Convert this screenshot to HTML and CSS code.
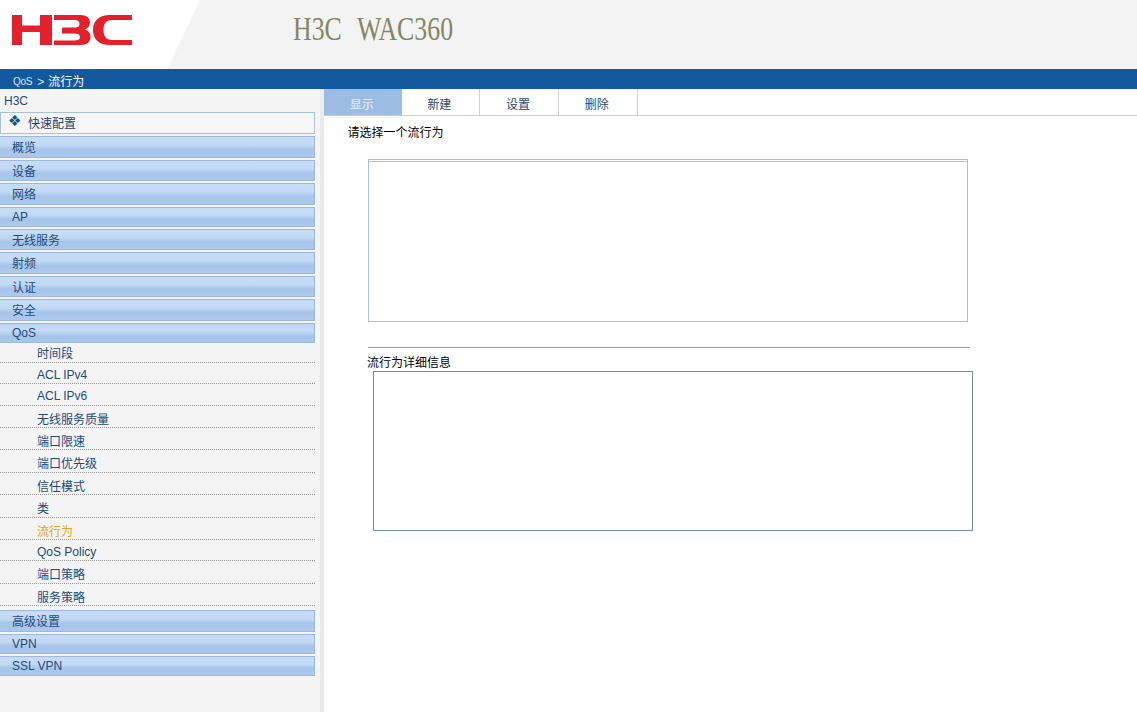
FILE: index.html
```html
<!DOCTYPE html>
<html lang="zh">
<head>
<meta charset="utf-8">
<title>H3C WAC360</title>
<link rel="stylesheet" href="styles.css">
</head>
<body>
<header class="top">
  <div class="logo-area">
    <svg class="logo" width="122" height="32" viewBox="0 0 122 32" aria-label="H3C">
      <path d="M0 1h10v10.500h18V1H40v30H28V18H10v13H0z" fill="#e3202c"/>
      <path d="M42 1h26c7 0 10 3 10 7.500c0 3.500-2 6-5.500 7c3.800 .8 6 3.500 6 7.500C78.500 28 75 31 68 31H42v-4.500h20c4 0 6-1 6-3.500s-2-3.500-6-3.500H50v-6h12c4 0 5.500-1 5.500-3.500S66 6 62 6H42z" fill="#e3202c"/>
      <path d="M120 1v5h-20c-6 0-8.500 4-8.500 10s2.500 10 8.500 10h20v5H98C87 31 81 25 81 16S87 1 98 1z" fill="#e3202c"/>
    </svg>
  </div>
  <div class="title"><span class="title-text">H3C WAC360</span></div>
</header>
<div class="crumb"><span class="crumb-root">QoS</span><span class="crumb-sep">&gt;</span><span>流行为</span></div>
<div class="body">
  <nav class="side">
    <div class="brand">H3C</div>
    <div class="quick"><span class="quick-icon">❖</span>快速配置</div>
    <div class="group">概览</div>
    <div class="group">设备</div>
    <div class="group">网络</div>
    <div class="group latin">AP</div>
    <div class="group">无线服务</div>
    <div class="group">射频</div>
    <div class="group">认证</div>
    <div class="group">安全</div>
    <div class="group latin open">QoS</div>
    <ul class="sub">
      <li class="first">时间段</li>
      <li class="latin">ACL IPv4</li>
      <li class="latin">ACL IPv6</li>
      <li>无线服务质量</li>
      <li>端口限速</li>
      <li>端口优先级</li>
      <li>信任模式</li>
      <li>类</li>
      <li class="active">流行为</li>
      <li class="latin">QoS Policy</li>
      <li>端口策略</li>
      <li>服务策略</li>
    </ul>
    <div class="group">高级设置</div>
    <div class="group latin">VPN</div>
    <div class="group latin">SSL VPN</div>
  </nav>
  <main class="main">
    <div class="tabs">
      <div class="tab current">显示</div>
      <div class="tab">新建</div>
      <div class="tab">设置</div>
      <div class="tab">删除</div>
    </div>
    <p class="prompt">请选择一个流行为</p>
    <div class="list-box"></div>
    <div class="rule"></div>
    <p class="detail-label">流行为详细信息</p>
    <div class="detail-box"></div>
  </main>
</div>
</body>
</html>
```
FILE: styles.css
```css
* { box-sizing: border-box; }
html, body { height: 100%; }
body {
  margin: 0;
  height: 712px;
  overflow: hidden;
  font: 12px/16px "Liberation Sans", "Noto Sans CJK SC", sans-serif;
  color: #000;
  background: #fff;
  display: flex;
  flex-direction: column;
}
.top {
  height: 69px;
  flex: none;
  display: flex;
  background: #f3f3f3;
}
.logo-area {
  width: 200px;
  flex: none;
  padding: 14px 0 0 12px;
  background: #fff;
  clip-path: polygon(0 0, 200px 0, 167px 69px, 0 69px);
}
.logo { display: block; }
.title {
  padding: 8px 0 0 93px;
  font: 34px/42px "Liberation Serif", serif;
  color: #83885f;
  white-space: pre;
}
.title-text {
  display: inline-block;
  transform: scaleX(.76);
  transform-origin: left center;
  word-spacing: 12px;
}
.crumb {
  height: 20px;
  flex: none;
  padding: 5px 0 0 13px;
  background: #12599f;
  color: #fff;
  font-size: 12px;
  line-height: 16px;
  display: flex;
}
.crumb-root { font-size: 10px; letter-spacing: -.3px; color: #dbe6f2; }
.crumb-sep { margin: 0 5px 0 5px; width: 6px; font-weight: 300; color: #dbe6f2; }
.body { flex: 1; display: flex; min-height: 0; }
.side {
  width: 324px;
  flex: none;
  padding: 3px 5px 0 0;
  background: #f4f4f4;
  border-right: 4px solid #ececec;
  color: #234a7c;
}
.brand { height: 20px; line-height: 18px; padding-left: 4px; }
.quick {
  height: 22px;
  margin-bottom: 2px;
  line-height: 22px;
  border: 1px solid #a9c1de;
  background: #f6f6f6;
  padding-left: 7px;
  display: flex;
  color: #1f3f6e;
}
.quick-icon { width: 20px; font: bold 15px/17px "DejaVu Sans", sans-serif; color: #1f4a80; }
.group {
  height: 21.500px;
  margin-bottom: 2px;
  padding-left: 12px;
  line-height: 22px;
  border: 1px solid #9db8d8;
  border-left: 0;
  background: linear-gradient(to bottom, #c6dcf6 0, #c2d9f5 40%, #a6c5ea 62%, #adc9ec 100%);
  color: #234a7c;
}
.group.latin { height: 20px; line-height: 19px; }
.group.open { background: linear-gradient(to bottom, #b9d4f3 0, #c5dcf6 35%, #a4c3e9 70%, #a9c7eb 100%); margin-bottom: 0; }
.sub { list-style: none; margin: 0 0 4.500px; padding: 0; }
.sub li {
  height: 22.400px;
  padding-left: 37px;
  line-height: 28px;
  border-bottom: 1px dotted #9a9a9a;
  color: #234a7c;
}
.sub li.first { height: 20.800px; line-height: 22px; }
.sub li.latin { height: 21.200px; line-height: 24px; }
.sub li.active { color: #e2a514; }
.main { flex: 1; min-width: 0; background: #fff; }
.tabs {
  height: 27px;
  display: flex;
  border-bottom: 1px solid #cfcfcf;
}
.tab {
  width: 78.700px;
  padding: 8px 2px 0 0;
  text-align: center;
  border-right: 1px solid #cfcfcf;
  color: #2b4a70;
}
.tab.current { width: 77.500px; background: #9dbce4; border-right: 0; color: #e6eefa; }
.prompt { margin: 9px 0 0 23.500px; height: 16px; }
.list-box {
  width: 600px;
  height: 163px;
  margin: 18px 0 0 44px;
  border: 1px solid #a9c2d6;
  border-top: 3px double #a9c2d6;
}
.rule {
  width: 602px;
  height: 1px;
  margin: 25px 0 0 44px;
  background: #9c9c9c;
}
.detail-label { margin: 7px 0 0 43px; height: 16px; }
.detail-box {
  width: 600px;
  height: 160px;
  margin: 0 0 0 49px;
  border: 1px solid #6f8f96;
}
```
